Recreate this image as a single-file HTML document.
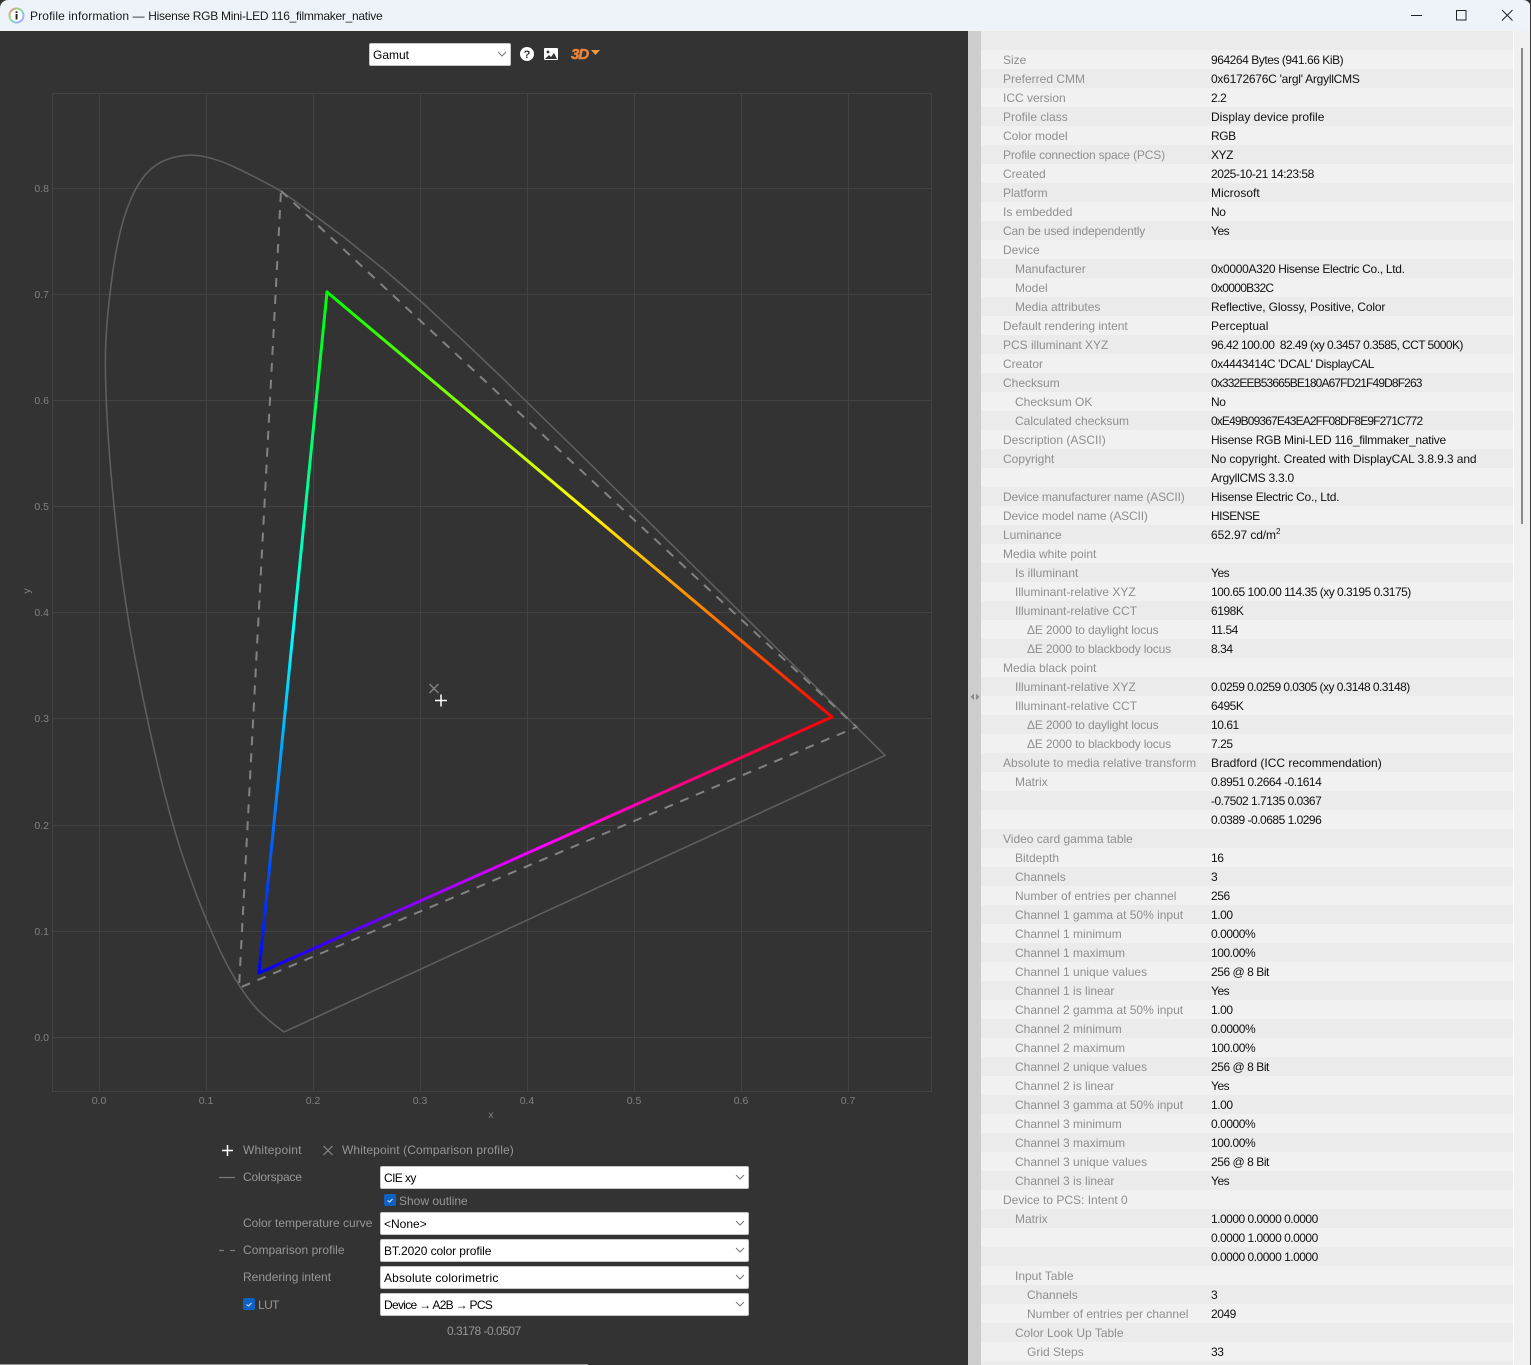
<!DOCTYPE html>
<html><head><meta charset="utf-8"><title>Profile information</title>
<style>
html,body{margin:0;padding:0;width:1531px;height:1365px;overflow:hidden;background:#333;font-family:"Liberation Sans",sans-serif;font-size:12px}
.a{position:absolute;white-space:nowrap}
#title{left:0;top:0;width:1531px;height:31px;background:#eef3fa;border-radius:8px 8px 0 0}
#tt{left:30px;top:8px;line-height:16px;color:#1a1a1a}
.lb{color:#969696;line-height:16px}
.sel{position:absolute;box-sizing:border-box;background:#fff;border:1px solid #c8c8c8;border-radius:2px;color:#000;line-height:23px;padding-left:3px;white-space:nowrap}
.sel svg{position:absolute;right:3px;top:7px}
.cb{position:absolute;width:12px;height:12px;background:#0f62c4;border-radius:2px}
#tbl{left:981px;top:31px;width:532px;height:1334px;background:repeating-linear-gradient(#ebebeb 0 19px,#f1f1f1 19px 38px);overflow:hidden}
.r{position:relative;height:19px;line-height:19px;white-space:nowrap}
.r span{position:absolute;left:22px;color:#8f8f8f;top:1px}
.r span.n{letter-spacing:-.16px}
.r.i1 span{left:34px}.r.i2 span{left:46px}
.r b{position:absolute;left:230px;font-weight:normal;color:#111;top:1px;letter-spacing:-.45px}
.r b.t{letter-spacing:0}
.r b.u{letter-spacing:-.25px}
.r b.h{letter-spacing:-.87px}
sup{font-size:8px;line-height:0}
</style></head><body>
<div class="a" id="title"></div>
<svg class="a" style="left:8px;top:7px" width="17" height="17" viewBox="0 0 17 17">
<defs><linearGradient id="rb" x1="0" y1="0" x2="1" y2="1"><stop offset="0" stop-color="#f7a"/><stop offset=".35" stop-color="#9d7"/><stop offset=".7" stop-color="#7cf"/><stop offset="1" stop-color="#c8f"/></linearGradient></defs>
<circle cx="8.5" cy="8.5" r="7" fill="#fff" stroke="url(#rb)" stroke-width="2"/>
<rect x="7.6" y="7" width="1.9" height="5.5" fill="#222"/><rect x="7.6" y="4.3" width="1.9" height="1.8" fill="#222"/></svg>
<div class="a" id="tt"><span style="letter-spacing:.13px">Profile information — </span><span style="letter-spacing:-.27px">Hisense RGB Mini-LED 116_filmmaker_native</span></div>
<svg class="a" style="left:1400px;top:0" width="131" height="31" fill="none" stroke="#222" stroke-width="1">
<path d="M11 15.5H22"/><rect x="56.5" y="10.5" width="9.5" height="9.5"/><path d="M102 10L112.5 20.5M112.5 10L102 20.5"/></svg>

<div class="sel" style="left:369px;top:43px;width:142px;height:23px">Gamut<svg width="10" height="7" fill="none" stroke="#777"><path d="M1 1l4 4 4-4"/></svg></div>
<svg class="a" style="left:518px;top:44px" width="90" height="22">
<circle cx="9" cy="10" r="7" fill="#fff"/>
<text x="9" y="14" font-family="Liberation Sans" font-weight="bold" font-size="11" fill="#333" text-anchor="middle">?</text>
<rect x="26" y="4" width="14" height="12" rx="1" fill="#fff"/>
<path d="M27 15l4-4 2 2 3-4 3 6z" fill="#333"/><circle cx="30" cy="8" r="1.4" fill="#333"/>
<text x="53" y="15" font-family="Liberation Sans" font-weight="bold" font-style="italic" font-size="15" fill="#e8843c" stroke="#e8843c" stroke-width=".5" letter-spacing="-1">3D</text>
<path d="M73 6h9l-4.5 5z" fill="#f09a3e"/></svg>

<svg class="a" style="left:0;top:0;pointer-events:none" width="968" height="1130" viewBox="0 0 968 1130">
<defs>
<linearGradient id="g1" gradientUnits="userSpaceOnUse" x1="327" y1="292" x2="832" y2="717"><stop offset="0" stop-color="#0f0"/><stop offset=".5" stop-color="#ff0"/><stop offset="1" stop-color="#f00"/></linearGradient>
<linearGradient id="g2" gradientUnits="userSpaceOnUse" x1="832" y1="717" x2="259" y2="973"><stop offset="0" stop-color="#f00"/><stop offset=".5" stop-color="#f0f"/><stop offset="1" stop-color="#00f"/></linearGradient>
<linearGradient id="g3" gradientUnits="userSpaceOnUse" x1="259" y1="973" x2="327" y2="292"><stop offset="0" stop-color="#00f"/><stop offset=".5" stop-color="#0ff"/><stop offset="1" stop-color="#0f0"/></linearGradient>
</defs>
<g stroke="#434343" stroke-width="1" fill="none" shape-rendering="crispEdges">
<rect x="52.5" y="93.5" width="879" height="998"/>
<path d="M99.5 94V1091M206.5 94V1091M313.5 94V1091M420.5 94V1091M527.5 94V1091M634.5 94V1091M741.5 94V1091M848.5 94V1091"/>
<path d="M53 188.5H931M53 294.5H931M53 400.5H931M53 506.5H931M53 612.5H931M53 718.5H931M53 825.5H931M53 931.5H931M53 1037.5H931"/>
</g>
<path fill="none" stroke="#5e5e5e" stroke-width="1.6" stroke-linejoin="round" d="M284 1032Q262 1016 251 1002Q240 988 230 970Q220 952 208 923.5Q196 895 184 860Q172 825 160 775Q148 725 136 662.5Q124 600 117 535Q110 470 107.2 420Q104.5 370 105.8 342.5Q107 315 112 277.5Q117 240 124.5 216.5Q132 193 142 179Q152 165 167 159.5Q182 154 197 155.5Q212 157 231 165.5Q250 174 281 191Q313 214 345 238L383.4 269L421.7 302L459.9 337.6L498.2 374L574.2 448.2L647.4 520.5L714.5 586.7L769.9 641.6L811.4 682.4L856.5 727L885.1 755.4Z"/>
<path d="M281 191L856.6 727L239 988Z" fill="none" stroke="#828282" stroke-width="2" stroke-dasharray="9 8"/>
<g fill="none" stroke-width="3" stroke-linecap="round">
<path d="M327 292L832 717" stroke="url(#g1)"/>
<path d="M832 717L259 973" stroke="url(#g2)"/>
<path d="M259 973L327 292" stroke="url(#g3)"/>
</g>
<path d="M429.5 684L438.5 693M438.5 684L429.5 693" stroke="#808080" stroke-width="1.5"/>
<path d="M435 700.5H447M441 694.5V706.5" stroke="#fff" stroke-width="1.5"/>
<g font-family="Liberation Sans" font-size="10.5" fill="#808080">
<g text-anchor="end"><text x="49" y="192">0.8</text><text x="49" y="298">0.7</text><text x="49" y="404">0.6</text><text x="49" y="510">0.5</text><text x="49" y="616">0.4</text><text x="49" y="722">0.3</text><text x="49" y="829">0.2</text><text x="49" y="935">0.1</text><text x="49" y="1041">0.0</text></g>
<g text-anchor="middle"><text x="99" y="1104">0.0</text><text x="206" y="1104">0.1</text><text x="313" y="1104">0.2</text><text x="420" y="1104">0.3</text><text x="527" y="1104">0.4</text><text x="634" y="1104">0.5</text><text x="741" y="1104">0.6</text><text x="848" y="1104">0.7</text>
<text x="491" y="1118">x</text><text transform="translate(30 591) rotate(-90)">y</text></g>
</g>
</svg>

<svg class="a" style="left:215px;top:1140px" width="125" height="120" fill="none">
<path d="M7 10.5H18M12.5 5V16" stroke="#fff" stroke-width="1.5"/>
<path d="M108.5 6L117.5 15M117.5 6L108.5 15" stroke="#8a8a8a" stroke-width="1.2"/>
<path d="M4 37.5H20" stroke="#7a7a7a" stroke-width="1.2"/>
<path d="M4 110.5H9M15 110.5H20" stroke="#7a7a7a" stroke-width="1.2"/>
</svg>
<div class="a lb" style="left:243px;top:1142px;letter-spacing:.2px">Whitepoint</div>
<div class="a lb" style="left:342px;top:1142px;letter-spacing:.1px">Whitepoint (Comparison profile)</div>
<div class="a lb" style="left:243px;top:1169px;letter-spacing:-.2px">Colorspace</div>
<div class="a lb" style="left:399px;top:1193px">Show outline</div>
<div class="a lb" style="left:243px;top:1215px">Color temperature curve</div>
<div class="a lb" style="left:243px;top:1242px;letter-spacing:.05px">Comparison profile</div>
<div class="a lb" style="left:243px;top:1269px">Rendering intent</div>
<div class="a lb" style="left:258px;top:1297px;letter-spacing:-.6px">LUT</div>
<div class="a lb" style="left:447px;top:1323px;letter-spacing:-.5px">0.3178 -0.0507</div>
<div class="cb" style="left:384px;top:1194px"><svg width="12" height="12" fill="none" stroke="#dfeaff"><path d="M3.5 6.5l2 1.5 3-3"/></svg></div>
<div class="cb" style="left:243px;top:1298px"><svg width="12" height="12" fill="none" stroke="#dfeaff"><path d="M3.5 6.5l2 1.5 3-3"/></svg></div>
<div class="sel" style="left:380px;top:1166px;width:369px;height:23px;letter-spacing:-.6px">CIE xy<svg width="10" height="7" fill="none" stroke="#777"><path d="M1 1l4 4 4-4"/></svg></div>
<div class="sel" style="left:380px;top:1212px;width:369px;height:23px">&lt;None&gt;<svg width="10" height="7" fill="none" stroke="#777"><path d="M1 1l4 4 4-4"/></svg></div>
<div class="sel" style="left:380px;top:1239px;width:369px;height:23px;letter-spacing:-.1px">BT.2020 color profile<svg width="10" height="7" fill="none" stroke="#777"><path d="M1 1l4 4 4-4"/></svg></div>
<div class="sel" style="left:380px;top:1266px;width:369px;height:23px;letter-spacing:.15px">Absolute colorimetric<svg width="10" height="7" fill="none" stroke="#777"><path d="M1 1l4 4 4-4"/></svg></div>
<div class="sel" style="left:380px;top:1293px;width:369px;height:23px;letter-spacing:-.7px">Device → A2B → PCS<svg width="10" height="7" fill="none" stroke="#777"><path d="M1 1l4 4 4-4"/></svg></div>

<div class="a" style="left:968px;top:31px;width:13px;height:1334px;background:#cdcdcd"></div>
<svg class="a" style="left:970px;top:693px" width="10" height="8" fill="#8c8c8c"><path d="M4 0.5V7L0.5 3.8zM6 0.5V7L9.5 3.8z"/></svg>
<div class="a" style="left:1513px;top:31px;width:1px;height:1334px;background:#fff"></div>
<div class="a" style="left:1514px;top:31px;width:16px;height:1334px;background:#f0f0f0"></div>
<div class="a" style="left:1521px;top:48px;width:2px;height:476px;background:#8a8a8a"></div>
<div class="a" style="left:1530px;top:0;width:1px;height:1365px;background:#3b3b3b"></div>

<div class="a" id="tbl">
<div style="height:19px"></div>
<div class="r"><span>Size</span><b>964264 Bytes (941.66 KiB)</b></div>
<div class="r"><span>Preferred CMM</span><b class="u">0x6172676C 'argl' ArgyllCMS</b></div>
<div class="r"><span>ICC version</span><b>2.2</b></div>
<div class="r"><span>Profile class</span><b class="t">Display device profile</b></div>
<div class="r"><span>Color model</span><b>RGB</b></div>
<div class="r"><span class="n">Profile connection space (PCS)</span><b>XYZ</b></div>
<div class="r"><span>Created</span><b>2025-10-21 14:23:58</b></div>
<div class="r"><span>Platform</span><b class="t">Microsoft</b></div>
<div class="r"><span>Is embedded</span><b>No</b></div>
<div class="r"><span class="n">Can be used independently</span><b>Yes</b></div>
<div class="r"><span>Device</span></div>
<div class="r i1"><span>Manufacturer</span><b style="letter-spacing:-.32px">0x0000A320 Hisense Electric Co., Ltd.</b></div>
<div class="r i1"><span>Model</span><b style="letter-spacing:-.7px">0x0000B32C</b></div>
<div class="r i1"><span>Media attributes</span><b style="letter-spacing:-.14px">Reflective, Glossy, Positive, Color</b></div>
<div class="r"><span>Default rendering intent</span><b class="t">Perceptual</b></div>
<div class="r"><span>PCS illuminant XYZ</span><b style="letter-spacing:-.56px">96.42 100.00 &nbsp;82.49 (xy 0.3457 0.3585, CCT 5000K)</b></div>
<div class="r"><span>Creator</span><b style="letter-spacing:-.39px">0x4443414C 'DCAL' DisplayCAL</b></div>
<div class="r"><span>Checksum</span><b class="h">0x332EEB53665BE180A67FD21F49D8F263</b></div>
<div class="r i1"><span>Checksum OK</span><b>No</b></div>
<div class="r i1"><span>Calculated checksum</span><b class="h">0xE49B09367E43EA2FF08DF8E9F271C772</b></div>
<div class="r"><span>Description (ASCII)</span><b class="u">Hisense RGB Mini-LED 116_filmmaker_native</b></div>
<div class="r"><span>Copyright</span><b style="letter-spacing:-.1px">No copyright. Created with DisplayCAL 3.8.9.3 and</b></div>
<div class="r"><b class="u">ArgyllCMS 3.3.0</b></div>
<div class="r"><span class="n">Device manufacturer name (ASCII)</span><b class="u">Hisense Electric Co., Ltd.</b></div>
<div class="r"><span class="n">Device model name (ASCII)</span><b style="letter-spacing:-.6px">HISENSE</b></div>
<div class="r"><span>Luminance</span><b style="letter-spacing:-.1px">652.97 cd/m<sup>2</sup></b></div>
<div class="r"><span>Media white point</span></div>
<div class="r i1"><span>Is illuminant</span><b>Yes</b></div>
<div class="r i1"><span>Illuminant-relative XYZ</span><b style="letter-spacing:-.5px">100.65 100.00 114.35 (xy 0.3195 0.3175)</b></div>
<div class="r i1"><span>Illuminant-relative CCT</span><b>6198K</b></div>
<div class="r i2"><span class="n">ΔE 2000 to daylight locus</span><b>11.54</b></div>
<div class="r i2"><span class="n">ΔE 2000 to blackbody locus</span><b>8.34</b></div>
<div class="r"><span>Media black point</span></div>
<div class="r i1"><span>Illuminant-relative XYZ</span><b style="letter-spacing:-.55px">0.0259 0.0259 0.0305 (xy 0.3148 0.3148)</b></div>
<div class="r i1"><span>Illuminant-relative CCT</span><b>6495K</b></div>
<div class="r i2"><span class="n">ΔE 2000 to daylight locus</span><b>10.61</b></div>
<div class="r i2"><span class="n">ΔE 2000 to blackbody locus</span><b>7.25</b></div>
<div class="r"><span style="letter-spacing:.03px">Absolute to media relative transform</span><b class="t">Bradford (ICC recommendation)</b></div>
<div class="r i1"><span>Matrix</span><b style="letter-spacing:-.5px">0.8951 0.2664 -0.1614</b></div>
<div class="r"><b style="letter-spacing:-.5px">-0.7502 1.7135 0.0367</b></div>
<div class="r"><b style="letter-spacing:-.5px">0.0389 -0.0685 1.0296</b></div>
<div class="r"><span>Video card gamma table</span></div>
<div class="r i1"><span>Bitdepth</span><b>16</b></div>
<div class="r i1"><span>Channels</span><b>3</b></div>
<div class="r i1"><span>Number of entries per channel</span><b>256</b></div>
<div class="r i1"><span>Channel 1 gamma at 50% input</span><b>1.00</b></div>
<div class="r i1"><span>Channel 1 minimum</span><b>0.0000%</b></div>
<div class="r i1"><span>Channel 1 maximum</span><b>100.00%</b></div>
<div class="r i1"><span>Channel 1 unique values</span><b>256 @ 8 Bit</b></div>
<div class="r i1"><span>Channel 1 is linear</span><b>Yes</b></div>
<div class="r i1"><span>Channel 2 gamma at 50% input</span><b>1.00</b></div>
<div class="r i1"><span>Channel 2 minimum</span><b>0.0000%</b></div>
<div class="r i1"><span>Channel 2 maximum</span><b>100.00%</b></div>
<div class="r i1"><span>Channel 2 unique values</span><b>256 @ 8 Bit</b></div>
<div class="r i1"><span>Channel 2 is linear</span><b>Yes</b></div>
<div class="r i1"><span>Channel 3 gamma at 50% input</span><b>1.00</b></div>
<div class="r i1"><span>Channel 3 minimum</span><b>0.0000%</b></div>
<div class="r i1"><span>Channel 3 maximum</span><b>100.00%</b></div>
<div class="r i1"><span>Channel 3 unique values</span><b>256 @ 8 Bit</b></div>
<div class="r i1"><span>Channel 3 is linear</span><b>Yes</b></div>
<div class="r"><span>Device to PCS: Intent 0</span></div>
<div class="r i1"><span>Matrix</span><b style="letter-spacing:-.5px">1.0000 0.0000 0.0000</b></div>
<div class="r"><b style="letter-spacing:-.5px">0.0000 1.0000 0.0000</b></div>
<div class="r"><b style="letter-spacing:-.5px">0.0000 0.0000 1.0000</b></div>
<div class="r i1"><span>Input Table</span></div>
<div class="r i2"><span>Channels</span><b>3</b></div>
<div class="r i2"><span>Number of entries per channel</span><b>2049</b></div>
<div class="r i1"><span>Color Look Up Table</span></div>
<div class="r i2"><span>Grid Steps</span><b>33</b></div>
</div>
<div class="a" style="left:0;top:1364px;width:588px;height:1px;background:#9a9a9a"></div>
</body></html>
